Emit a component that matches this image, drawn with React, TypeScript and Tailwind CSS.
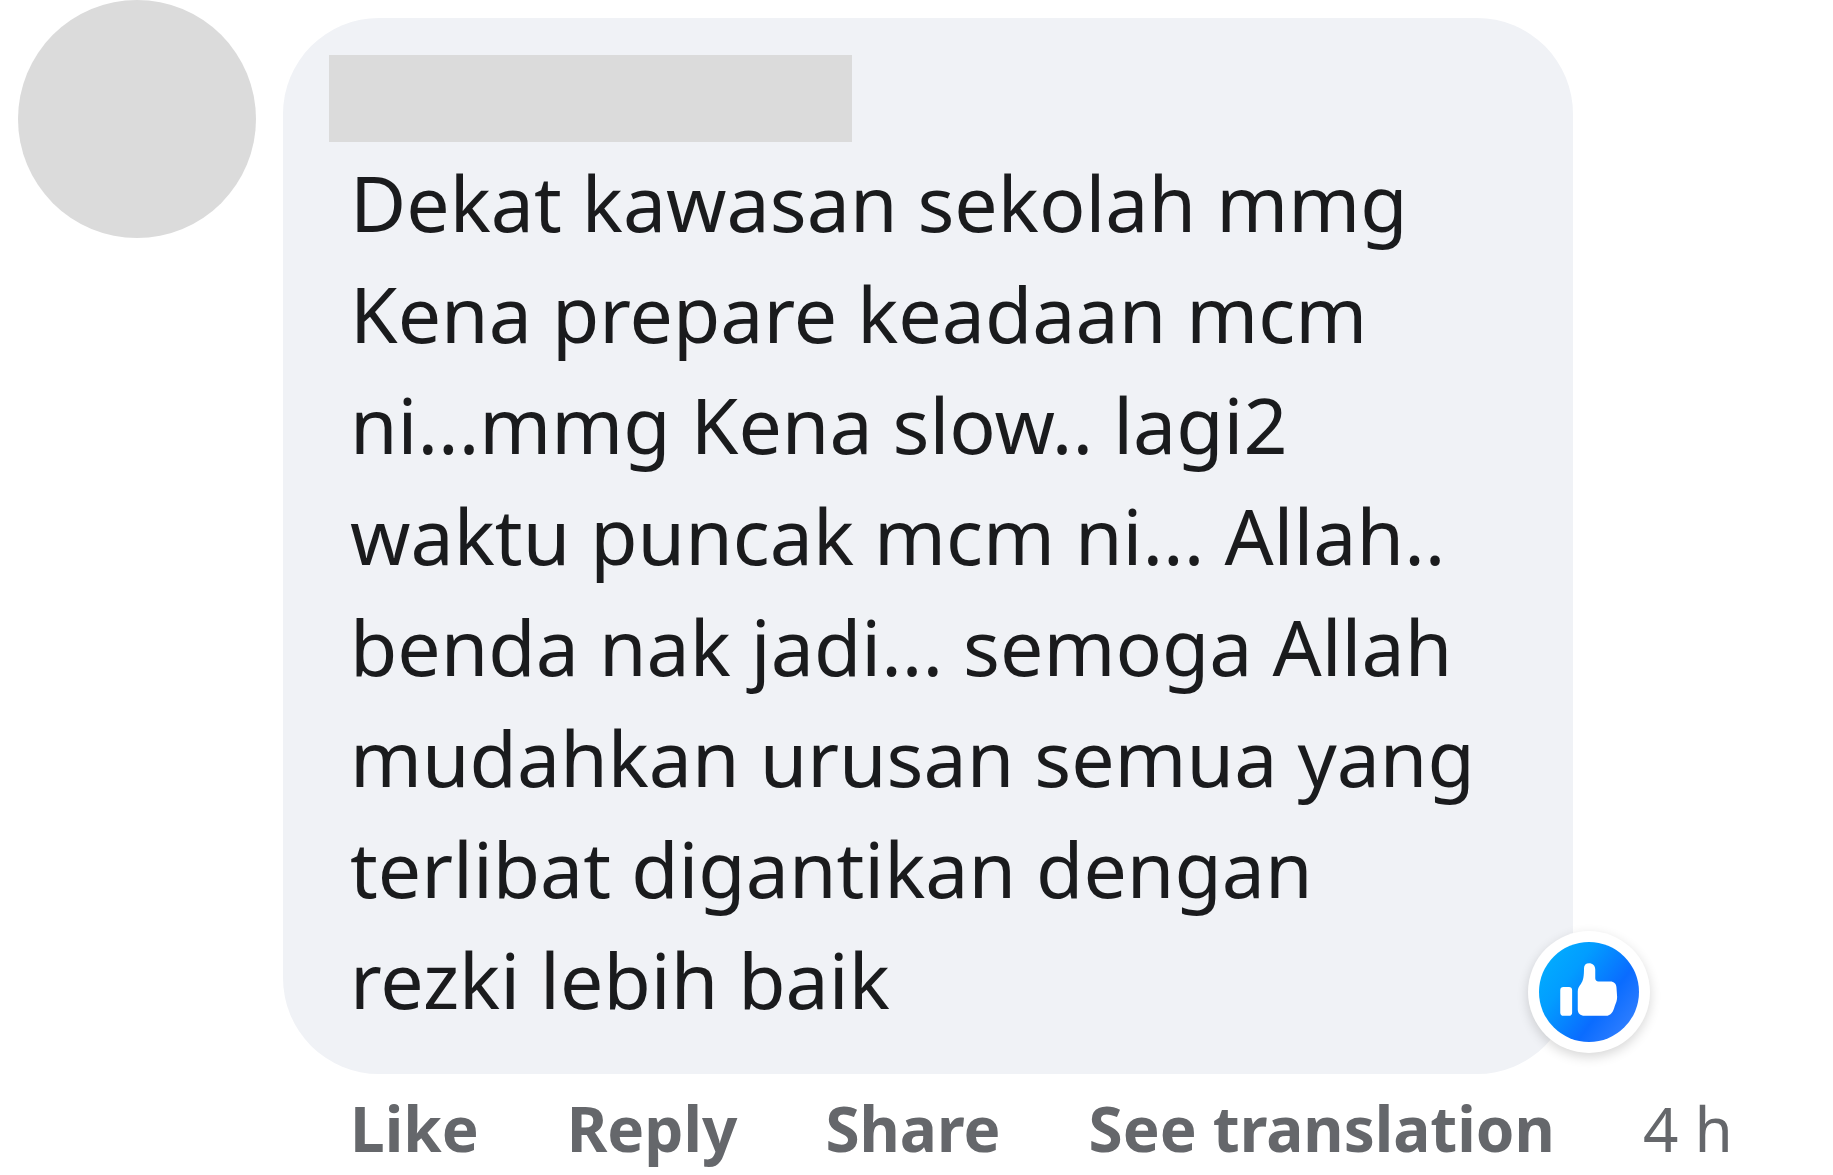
import React from "react";

const lines = [
  "Dekat kawasan sekolah mmg",
  "Kena prepare keadaan mcm",
  "ni...mmg Kena slow.. lagi2",
  "waktu puncak mcm ni... Allah..",
  "benda nak jadi... semoga Allah",
  "mudahkan urusan semua yang",
  "terlibat digantikan dengan",
  "rezki lebih baik",
];

export default function App() {
  return (
    <main className="flex min-h-screen items-start overflow-hidden bg-white pl-[18px] font-['Noto_Sans',sans-serif]">
      <div className="size-[238px] shrink-0 rounded-full bg-[#dbdbdb]" />
      <article className="ml-[27px] mt-[18px] min-w-0 flex-1">
        <div className="relative mr-[260px] rounded-[96px] bg-[#f0f2f6] pb-[39px] pl-[46px] pt-[37px]">
          <div className="h-[87px] w-[523px] bg-[#dbdbdb]" />
          <p className="ml-[21px] mt-[5px] whitespace-nowrap text-[77px] leading-[111px] text-[#1a1b1d]">
            {lines.map((l) => (
              <span key={l} className="block">{l}</span>
            ))}
          </p>
          <div className="absolute -right-[77px] bottom-[21px] flex size-[122px] items-center justify-center rounded-full bg-white shadow-[0_4px_12px_rgba(0,0,0,0.16)]">
            <svg viewBox="0 0 16 16" className="size-[100px]" aria-label="Like reaction" role="img">
              <defs>
                <linearGradient id="blue" x1="0.1" y1="0.2" x2="0.9" y2="0.8">
                  <stop offset="0" stopColor="#02a9fe" />
                  <stop offset="0.25" stopColor="#029dff" />
                  <stop offset="0.7" stopColor="#0a6cff" />
                  <stop offset="1" stopColor="#2b7cff" />
                </linearGradient>
              </defs>
              <circle cx="8" cy="8" r="8" fill="url(#blue)" />
              <path
                fill="#fff"
                d="M7.2 4.2c0-.5.3-.8.8-.8.6 0 1 .4 1 1v1.400c0 .3.200.5.5.5h1.900c.6 0 1 .4 1 1l.1 1.500c0 .6-.2 1-.4 1.500-.2.800-.6 1.500-1.400 1.500H7.300c-.7 0-1.100-.4-1.100-1V7.900c0-.5.2-.8.500-1.200.4-.5.5-1.300.5-2.500zM3.400 7.700c0-.3.200-.5.5-.5h.900c.3 0 .5.200.5.5v3.600c0 .3-.2.5-.5.5h-.9c-.3 0-.5-.2-.5-.5z"
              />
            </svg>
          </div>
        </div>
        <nav className="ml-[67px] flex gap-[88px] whitespace-nowrap pt-[9px] text-[62px] font-bold leading-[90px] text-[#65676b]">
          <button>Like</button>
          <button>Reply</button>
          <button>Share</button>
          <button>See translation</button>
          <a href="#time" className="font-normal">4 h</a>
        </nav>
      </article>
    </main>
  );
}
